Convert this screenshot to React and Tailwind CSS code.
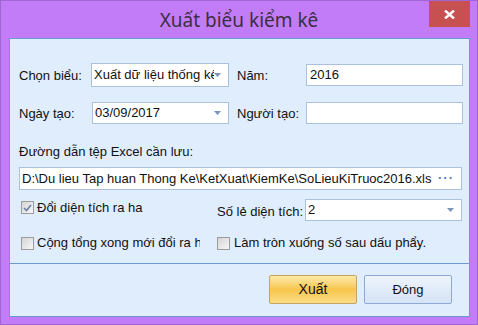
import React from 'react';

const Arrow = () => (
  <svg width="7" height="4" viewBox="0 0 7 4" className="shrink-0">
    <path d="M0 0 H7 L3.5 4 Z" fill="#7b93b8" />
  </svg>
);

const Check = ({ checked }) => (
  <span className="w-[13px] h-[13px] shrink-0 border border-[#9c9c9c] bg-gradient-to-br from-[#d4d4d4] to-[#f8f8f8] flex items-center justify-center">
    {checked && (
      <svg width="9" height="8" viewBox="0 0 9 8">
        <path d="M1 4 L3.5 6.5 L8 1" stroke="#6a80a4" strokeWidth="1.6" fill="none" />
      </svg>
    )}
  </span>
);

const Combo = ({ value, className }) => (
  <div className={`bg-white border border-[#abc1de] flex items-center pl-[2px] pr-[7px] overflow-hidden ${className}`}>
    <span className="flex-1 whitespace-nowrap overflow-hidden">{value}</span>
    <Arrow />
  </div>
);

export default function App() {
  return (
    <div
      className="w-[478px] h-[325px] bg-[#c27cf8] border border-[#a066d4] flex flex-col text-[13px] text-[#111]"
      style={{ fontFamily: '"Liberation Sans", "DejaVu Sans", sans-serif' }}
    >
      {/* title bar */}
      <div className="relative h-[37px] flex items-center justify-center">
        <span
          className="text-[19px] text-[#3a3040] pt-[1px]"
          style={{ fontFamily: '"Noto Sans", "Open Sans", sans-serif' }}
        >
          Xuất biểu kiểm kê
        </span>
        <div className="absolute left-[428px] top-0 w-[41px] h-[26px] bg-[#c75050] flex items-center justify-center">
          <svg width="11" height="9" viewBox="0 0 11 9">
            <path d="M1 0.5 L10 8.5 M10 0.5 L1 8.5" stroke="#fff" strokeWidth="2.4" />
          </svg>
        </div>
      </div>

      {/* panel */}
      <div className="ml-[8px] w-[461px] h-[279px] border border-[#6b9ad3] bg-[#e0edfd] flex flex-col">
        <div className="h-[225px] border-b border-[#6b9ad3] pl-[9px] pt-[24px] flex flex-col">
          <div className="flex items-center h-[24px]">
            <span className="w-[72px] mt-[2px]">Chọn biểu:</span>
            <Combo value="Xuất dữ liệu thống kê" className="w-[138px] h-[24px]" />
            <span className="ml-[8px] w-[69px] mt-[2px]">Năm:</span>
            <div className="w-[157px] h-[22px] bg-white border border-[#abc1de] flex items-center pl-[3px]">2016</div>
          </div>

          <div className="flex items-center h-[22px] mt-[15px]">
            <span className="w-[73px] mt-[2px]">Ngày tạo:</span>
            <Combo value="03/09/2017" className="w-[137px] h-[22px]" />
            <span className="ml-[8px] w-[69px] mt-[2px]">Người tạo:</span>
            <div className="w-[157px] h-[22px] bg-white border border-[#abc1de]" />
          </div>

          <div className="mt-[20px] h-[16px] leading-[16px]">Đường dẫn tệp Excel cần lưu:</div>

          <div className="mt-[7px] w-[443px] h-[23px] bg-white border border-[#abc1de] flex items-center pl-[2px] pr-[7px]">
            <span className="flex-1 whitespace-nowrap overflow-hidden">
              D:\Du lieu Tap huan Thong Ke\KetXuat\KiemKe\SoLieuKiTruoc2016.xls
            </span>
            <span className="text-[#5d7ba6] font-bold tracking-[1px] leading-none mb-[3px]">···</span>
          </div>

          <div className="flex items-center h-[22px] mt-[9px]">
            <div className="w-[198px] flex items-center gap-[3px] pl-[2px] mb-[5px]">
              <Check checked />
              <span>Đổi diện tích ra ha</span>
            </div>
            <span className="w-[88px] mt-[4px] whitespace-nowrap">Số lẻ diện tích:</span>
            <Combo value="2" className="w-[157px] h-[22px]" />
          </div>

          <div className="flex items-center h-[16px] mt-[14px]">
            <div className="w-[181px] flex items-center gap-[3px] pl-[2px] overflow-hidden whitespace-nowrap">
              <Check />
              <span>Cộng tổng xong mới đổi ra ha</span>
            </div>
            <div className="ml-[17px] flex items-center gap-[4px] whitespace-nowrap">
              <Check />
              <span>Làm tròn xuống số sau dấu phẩy.</span>
            </div>
          </div>
        </div>

        <div className="flex-1 flex justify-end gap-[7px] pr-[17px] pt-[11px]">
          <div className="w-[88px] h-[29px] rounded-[2px] border border-[#c4a45e] bg-gradient-to-b from-[#fdeaa8] via-[#f7c64a] to-[#fbdc86] flex items-center justify-center text-[14px]">
            Xuất
          </div>
          <div className="w-[88px] h-[29px] rounded-[2px] border border-[#8eaad2] bg-gradient-to-b from-[#eef4fd] to-[#d5e3f6] flex items-center justify-center text-[13px]">
            Đóng
          </div>
        </div>
      </div>
    </div>
  );
}
